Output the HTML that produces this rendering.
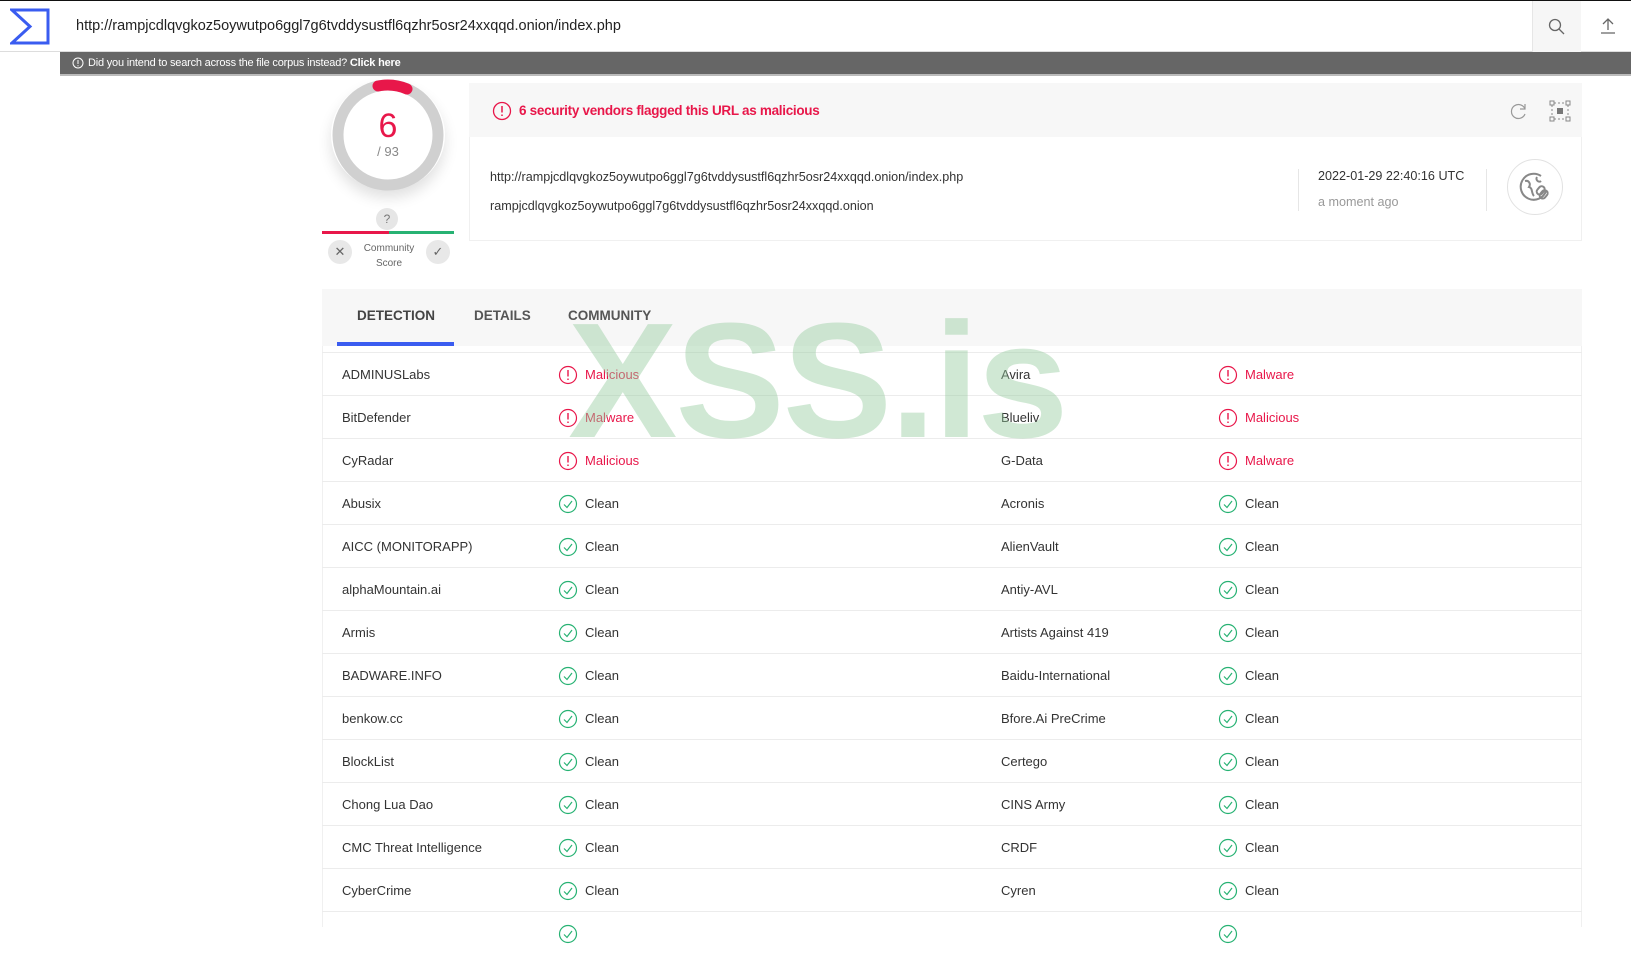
<!DOCTYPE html>
<html><head><meta charset="utf-8"><style>
*{margin:0;padding:0;box-sizing:border-box}
body{width:1631px;height:927px;overflow:hidden;background:#fff;font-family:"Liberation Sans",sans-serif;color:#333;position:relative}
.a{position:absolute}
.row{position:absolute;left:322px;width:1260px;height:43px;border-top:1px solid #ececec;font-size:13px;color:#333}
.row span{position:absolute;top:14px}
.row svg{position:absolute;top:12px}
.bad{color:#e8174a}
</style></head><body>
<div class="a" style="left:0;top:0;width:1631px;height:1px;background:#111"></div>
<div class="a" style="left:0;top:1px;width:1631px;height:51px;background:#fff;border-bottom:1px solid #ddd"></div>
<svg class="a" style="left:10px;top:8px" width="40" height="37" viewBox="0 0 40 37"><path d="M2 2H38V35H2L20 18.5Z" fill="none" stroke="#3a5cf0" stroke-width="3" stroke-linejoin="miter"/></svg>
<div class="a" style="left:76px;top:18px;font-size:14.5px;color:#222">http://rampjcdlqvgkoz5oywutpo6ggl7g6tvddysustfl6qzhr5osr24xxqqd.onion/index.php</div>
<div class="a" style="left:1532px;top:1px;width:49px;height:51px;background:#f6f6f6;border-left:1px solid #e6e6e6"></div>
<svg class="a" style="left:1548px;top:18px" width="18" height="18" viewBox="0 0 18 18"><circle cx="7" cy="7" r="5.5" fill="none" stroke="#666" stroke-width="1.3"/><path d="M11 11L16 16" stroke="#666" stroke-width="1.3"/></svg>
<svg class="a" style="left:1599px;top:17px" width="18" height="18" viewBox="0 0 18 18"><path d="M9 13V2M4 7L9 2L14 7M2 16H16" fill="none" stroke="#666" stroke-width="1.3"/></svg>
<div class="a" style="left:60px;top:52px;width:1571px;height:24px;background:#666;border-bottom:2px solid #bbb"></div>
<svg class="a" style="left:72px;top:57px" width="12" height="12" viewBox="0 0 12 12"><circle cx="6" cy="6" r="5" fill="none" stroke="#fff" stroke-width="1"/><path d="M6 3V7M6 8.3V9.3" stroke="#fff"/></svg>
<div class="a" style="left:88px;top:57px;font-size:11px;color:#fff;letter-spacing:-0.2px">Did you intend to search across the file corpus instead? <b>Click here</b></div>

<!-- score -->
<div class="a" style="left:331px;top:80px;width:114px;height:110px;border-radius:50%;box-shadow:0 8px 14px rgba(0,0,0,.12)"></div>
<svg class="a" style="left:331px;top:78px" width="114" height="114" viewBox="0 0 114 114"><circle cx="57" cy="57" r="50" fill="none" stroke="#d0d0d0" stroke-width="11"/><path d="M47 8A50 50 0 0 1 76 11" fill="none" stroke="#e8174a" stroke-width="11" stroke-linecap="round"/><circle cx="57" cy="57" r="43" fill="#fff"/></svg>
<div class="a" style="left:331px;top:108px;width:114px;text-align:center;font-size:34px;color:#e8174a;line-height:36px">6</div>
<div class="a" style="left:331px;top:144px;width:114px;text-align:center;font-size:13px;color:#888">/ 93</div>
<div class="a" style="left:376px;top:208px;width:22px;height:22px;border-radius:50%;background:#e6e6e6;text-align:center;font-size:12px;line-height:22px;color:#777">?</div>
<div class="a" style="left:322px;top:231px;width:67px;height:3px;background:#e8174a"></div>
<div class="a" style="left:389px;top:231px;width:65px;height:3px;background:#27b273"></div>
<div class="a" style="left:328px;top:240px;width:24px;height:24px;border-radius:50%;background:#e8e8e8;text-align:center;line-height:24px;font-size:13px;color:#666">✕</div>
<div class="a" style="left:426px;top:240px;width:24px;height:24px;border-radius:50%;background:#e8e8e8;text-align:center;line-height:24px;font-size:13px;color:#666">✓</div>
<div class="a" style="left:352px;top:241px;width:74px;text-align:center;font-size:10px;color:#666;line-height:15px">Community<br>Score</div>

<!-- banner -->
<div class="a" style="left:469px;top:83px;width:1113px;height:54px;background:#f7f7f7"></div>
<svg class="a" style="left:492px;top:101px" width="20" height="20" viewBox="0 0 20 20"><circle cx="10" cy="10" r="8.5" fill="none" stroke="#e8174a" stroke-width="1.3"/><path d="M10 5V11.5M10 13.5V15" stroke="#e8174a" stroke-width="1.5"/></svg>
<div class="a" style="left:519px;top:103px;font-size:13.5px;color:#e8174a;font-weight:bold;letter-spacing:-0.3px">6 security vendors flagged this URL as malicious</div>
<svg class="a" style="left:1509px;top:101px" width="20" height="20" viewBox="0 0 20 20"><path d="M16 8A7 7 0 1 0 16 13M16 3V8H11" fill="none" stroke="#999" stroke-width="1.2"/></svg>
<svg class="a" style="left:1549px;top:100px" width="22" height="22" viewBox="0 0 22 22"><g fill="none" stroke="#888"><rect x="1" y="1" width="4" height="4"/><rect x="17" y="1" width="4" height="4"/><rect x="1" y="17" width="4" height="4"/><rect x="17" y="17" width="4" height="4"/><path d="M5 3H17M5 19H17M3 5V17M19 5V17" stroke-dasharray="2 2"/></g><rect x="8" y="8" width="6" height="6" fill="#777"/></svg>
<div class="a" style="left:469px;top:137px;width:1113px;height:104px;border:1px solid #f0f0f0;border-top:none"></div>
<div class="a" style="left:490px;top:170px;font-size:12.6px;color:#333">http://rampjcdlqvgkoz5oywutpo6ggl7g6tvddysustfl6qzhr5osr24xxqqd.onion/index.php</div>
<div class="a" style="left:490px;top:199px;font-size:12.6px;color:#333">rampjcdlqvgkoz5oywutpo6ggl7g6tvddysustfl6qzhr5osr24xxqqd.onion</div>
<div class="a" style="left:1298px;top:169px;width:1px;height:42px;background:#e6e6e6"></div>
<div class="a" style="left:1318px;top:169px;font-size:12.6px;color:#333">2022-01-29 22:40:16 UTC</div>
<div class="a" style="left:1318px;top:195px;font-size:12.6px;color:#999">a moment ago</div>
<div class="a" style="left:1486px;top:169px;width:1px;height:42px;background:#e6e6e6"></div>
<div class="a" style="left:1507px;top:159px;width:56px;height:56px;border-radius:50%;border:1px solid #e2e2e2"></div>
<svg class="a" style="left:1519px;top:171px" width="32" height="32" viewBox="0 0 32 32"><g fill="none" stroke="#888" stroke-width="2"><path d="M22 5A13 13 0 1 0 27 20"/><path d="M6 10C10 9 12 13 10 16C14 17 12 22 15 25M18 6C16 9 20 12 22 10"/><rect x="19" y="15" width="6" height="9" rx="3" transform="rotate(40 22 19)"/><rect x="22" y="19" width="6" height="9" rx="3" transform="rotate(40 25 23)"/></g></svg>

<!-- tabs -->
<div class="a" style="left:322px;top:289px;width:1260px;height:57px;background:#f7f7f7"></div>
<div class="a" style="left:357px;top:308px;font-size:13.5px;color:#444;font-weight:bold">DETECTION</div>
<div class="a" style="left:474px;top:308px;font-size:13.5px;color:#555;font-weight:bold">DETAILS</div>
<div class="a" style="left:568px;top:308px;font-size:13.5px;color:#555;font-weight:bold">COMMUNITY</div>
<div class="a" style="left:337px;top:342px;width:117px;height:4px;background:#3a5cf0"></div>
<div class="a" style="left:322px;top:346px;width:1260px;height:581px;border-left:1px solid #f0f0f0;border-right:1px solid #f0f0f0"></div>

<div id="rows"></div>
<script>
var d=[["ADMINUSLabs",1,"Malicious","Avira",1,"Malware"],["BitDefender",1,"Malware","Blueliv",1,"Malicious"],["CyRadar",1,"Malicious","G-Data",1,"Malware"],["Abusix",0,"Clean","Acronis",0,"Clean"],["AICC (MONITORAPP)",0,"Clean","AlienVault",0,"Clean"],["alphaMountain.ai",0,"Clean","Antiy-AVL",0,"Clean"],["Armis",0,"Clean","Artists Against 419",0,"Clean"],["BADWARE.INFO",0,"Clean","Baidu-International",0,"Clean"],["benkow.cc",0,"Clean","Bfore.Ai PreCrime",0,"Clean"],["BlockList",0,"Clean","Certego",0,"Clean"],["Chong Lua Dao",0,"Clean","CINS Army",0,"Clean"],["CMC Threat Intelligence",0,"Clean","CRDF",0,"Clean"],["CyberCrime",0,"Clean","Cyren",0,"Clean"],["",0,"","",0,""]];
function ic(b,x){return b?'<svg style="left:'+x+'px" width="20" height="20" viewBox="0 0 20 20"><circle cx="10" cy="10" r="8.5" fill="none" stroke="#e8174a" stroke-width="1.2"/><path d="M10 5V11.5M10 13.5V15" stroke="#e8174a" stroke-width="1.4"/></svg>':'<svg style="left:'+x+'px" width="20" height="20" viewBox="0 0 20 20"><circle cx="10" cy="10" r="8.5" fill="none" stroke="#27b273" stroke-width="1.2"/><path d="M6 10.5L9 13.5L14 7" fill="none" stroke="#27b273" stroke-width="1.2"/></svg>'}
var h='';d.forEach(function(r,i){h+='<div class="row" style="top:'+(352+i*43)+'px"><span style="left:20px">'+r[0]+'</span>'+ic(r[1],236)+'<span style="left:263px" class="'+(r[1]?'bad':'')+'">'+r[2]+'</span><span style="left:679px">'+r[3]+'</span>'+ic(r[4],896)+'<span style="left:923px" class="'+(r[4]?'bad':'')+'">'+r[5]+'</span></div>'});
document.getElementById('rows').innerHTML=h;
</script>
<div class="a" style="left:568px;top:296px;font-size:164px;font-weight:bold;color:rgba(150,205,160,0.45);letter-spacing:-2px;line-height:170px">XSS.is</div>
</body></html>
